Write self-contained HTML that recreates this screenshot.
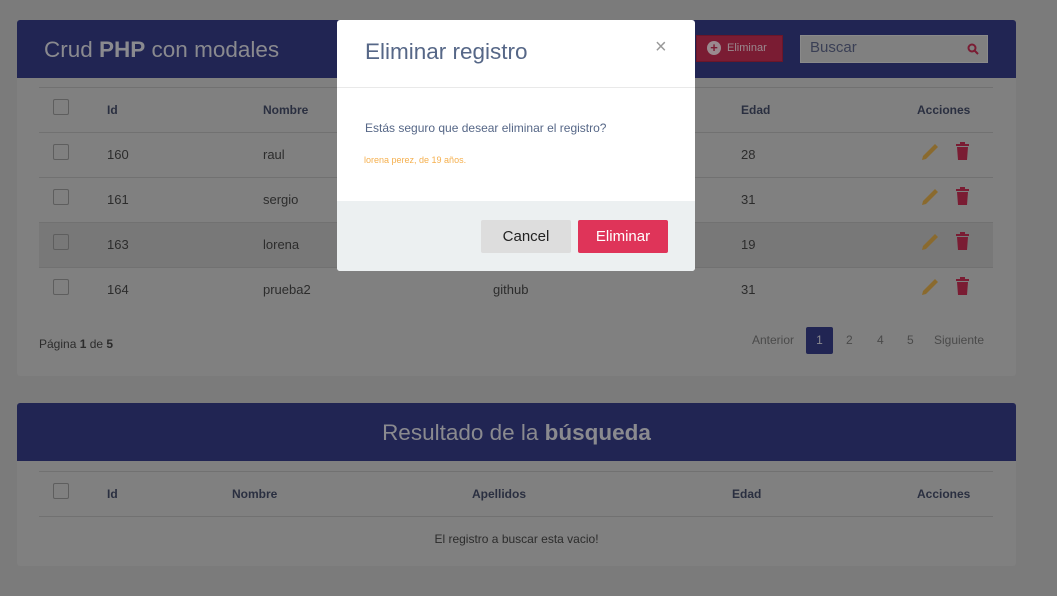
<!DOCTYPE html>
<html><head><meta charset="utf-8"><style>
*{box-sizing:border-box;margin:0;padding:0}
body{width:1057px;height:596px;background:#7b7b7b;font-family:"Liberation Sans",sans-serif;position:relative;overflow:hidden;color:#2c2c2c}
.card{position:absolute;left:17px;width:999px;background:#808080;border-radius:3px}
.hd{background:#212553;height:58px;border-radius:3px 3px 0 0;position:relative;color:#8a8a8f}
.t{position:absolute;font-size:13px}
.hr{position:absolute;left:39px;width:954px;height:1px;background:#717171}
.cb{position:absolute;left:53px;width:16px;height:16px;border:1px solid #5e5e5e;border-radius:2px}
.b{font-weight:bold}
.h{font-size:12px;font-weight:bold;color:#2a2f40}
.modal{position:absolute;left:337px;top:20px;width:358px;height:251px;background:#fff;border-radius:3px;overflow:hidden}
</style></head><body>
<div class="card" style="top:20px;height:356px">
<div class="hd"><div class="t" style="left:27px;top:17px;font-size:22.5px">Crud <b>PHP</b> con modales</div>
<div style="position:absolute;left:679px;top:15px;width:87px;height:27px;background:#7a1c33;border:1px solid #6a1629"></div>
<div style="position:absolute;left:690px;top:21px;width:14px;height:14px;border-radius:50%;background:#9a8a8f;color:#7a1c33;font-size:13px;line-height:14px;text-align:center;font-weight:bold">+</div>
<div class="t" style="left:710px;top:22px;font-size:11px;color:#9a8a8f">Eliminar</div>
<div style="position:absolute;left:783px;top:15px;width:188px;height:28px;background:#808080;border:1px solid #8a8a8a"></div>
<div class="t" style="left:793px;top:19px;font-size:15px;color:#3a3f55">Buscar</div>
<svg style="position:absolute;left:950px;top:23px" width="12" height="12"><circle cx="5" cy="5" r="3.5" fill="none" stroke="#7a1c33" stroke-width="2"/><path d="M7.5 7.5 L11 11" stroke="#7a1c33" stroke-width="2"/></svg>
</div></div>
<div class="hr" style="top:87px"></div>
<div class="cb" style="top:99px"></div>
<div class="t h" style="left:107px;top:103px">Id</div>
<div class="t h" style="left:263px;top:103px">Nombre</div>
<div class="t h" style="left:741px;top:103px">Edad</div>
<div class="t h" style="left:917px;top:103px">Acciones</div>
<div class="hr" style="top:132px"></div>
<div style="position:absolute;left:39px;top:223px;width:954px;height:44px;background:#787878"></div>
<div class="hr" style="top:177px"></div><div class="hr" style="top:222px"></div><div class="hr" style="top:267px"></div>
<div class="cb" style="top:144px"></div><div class="cb" style="top:189px"></div><div class="cb" style="top:234px"></div><div class="cb" style="top:279px"></div>
<div class="t" style="left:107px;top:147px">160</div><div class="t" style="left:263px;top:147px">raul</div><div class="t" style="left:741px;top:147px">28</div>
<div class="t" style="left:107px;top:192px">161</div><div class="t" style="left:263px;top:192px">sergio</div><div class="t" style="left:741px;top:192px">31</div>
<div class="t" style="left:107px;top:237px">163</div><div class="t" style="left:263px;top:237px">lorena</div><div class="t" style="left:741px;top:237px">19</div>
<div class="t" style="left:107px;top:282px">164</div><div class="t" style="left:263px;top:282px">prueba2</div><div class="t" style="left:493px;top:282px">github</div><div class="t" style="left:741px;top:282px">31</div>
<svg style="position:absolute;left:920px;top:140px" width="55" height="160">
<g id="ic"><path d="M3 16 L2 20 L6 19 L18 7 L15 4 Z" fill="#8a6a2e"/><rect x="36" y="4" width="13" height="2" fill="#7a1c33"/><rect x="40" y="2" width="5" height="3" fill="#7a1c33"/><path d="M37 7 H48 L47 20 H38 Z" fill="#7a1c33"/></g>
<use href="#ic" y="45"/><use href="#ic" y="90"/><use href="#ic" y="135"/></svg>
<div class="t" style="left:39px;top:337px;font-size:12px">Página <b>1</b> de <b>5</b></div>
<div class="t" style="left:752px;top:333px;font-size:12px;color:#4a4a4a">Anterior</div>
<div style="position:absolute;left:806px;top:327px;width:27px;height:27px;background:#212553;border-radius:2px;color:#8a8a8f;font-size:12px;text-align:center;line-height:27px">1</div>
<div class="t" style="left:846px;top:333px;font-size:12px;color:#4a4a4a">2</div>
<div class="t" style="left:877px;top:333px;font-size:12px;color:#4a4a4a">4</div>
<div class="t" style="left:907px;top:333px;font-size:12px;color:#4a4a4a">5</div>
<div class="t" style="left:934px;top:333px;font-size:12px;color:#4a4a4a">Siguiente</div>

<div class="card" style="top:403px;height:163px">
<div class="hd"><div style="position:absolute;left:0;width:100%;top:17px;text-align:center;font-size:22.5px">Resultado de la <b>búsqueda</b></div></div></div>
<div class="hr" style="top:471px"></div>
<div class="cb" style="top:483px"></div>
<div class="t h" style="left:107px;top:487px">Id</div>
<div class="t h" style="left:232px;top:487px">Nombre</div>
<div class="t h" style="left:472px;top:487px">Apellidos</div>
<div class="t h" style="left:732px;top:487px">Edad</div>
<div class="t h" style="left:917px;top:487px">Acciones</div>
<div class="hr" style="top:516px"></div>
<div class="t" style="left:0;width:1033px;text-align:center;top:532px;font-size:12px">El registro a buscar esta vacio!</div>

<div class="modal">
<div style="position:absolute;left:28px;top:19px;font-size:22.5px;color:#566787">Eliminar registro</div>
<div style="position:absolute;left:318px;top:16px;font-size:20px;color:#999">×</div>
<div style="position:absolute;left:0;top:67px;width:100%;height:1px;background:#e9e9e9"></div>
<div style="position:absolute;left:28px;top:101px;font-size:12px;color:#566787">Estás seguro que desear eliminar el registro?</div>
<div style="position:absolute;left:27px;top:135px;font-size:9px;color:#f5b04f">lorena perez, de 19 años.</div>
<div style="position:absolute;left:0;top:181px;width:100%;height:70px;background:#ecf0f1"></div>
<div style="position:absolute;left:144px;top:200px;width:90px;height:33px;background:#ddd;border-radius:2px;font-size:15px;text-align:center;line-height:33px;color:#222">Cancel</div>
<div style="position:absolute;left:241px;top:200px;width:90px;height:33px;background:#df3459;border-radius:2px;font-size:15px;text-align:center;line-height:33px;color:#fff">Eliminar</div>
</div>
</body></html>
